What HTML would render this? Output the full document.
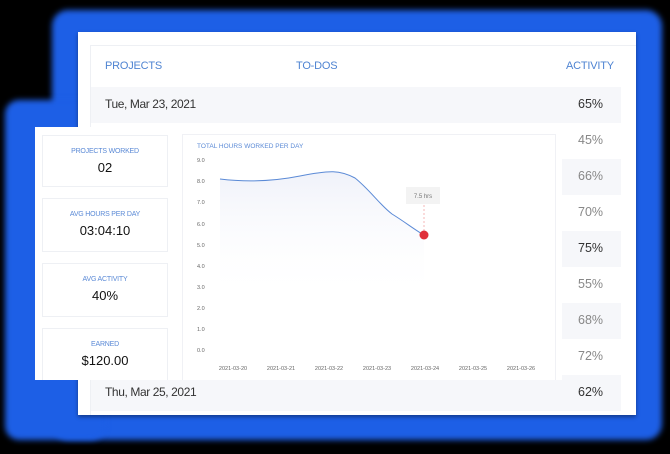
<!DOCTYPE html>
<html><head><style>
*{margin:0;padding:0;box-sizing:border-box}
body{width:670px;height:454px;background:#000;position:relative;overflow:hidden;font-family:"Liberation Sans",sans-serif}
.glow{position:absolute;background:#1d5fe6;filter:blur(3px)}
.main{position:absolute;left:78px;top:32px;width:558px;height:383px;background:#fff;box-shadow:0 2px 4px rgba(0,0,0,.4)}
.panel{position:absolute;left:90px;top:45px;width:546px;height:370px;border-left:1px solid #eef0f4;border-top:1px solid #eef0f4}
.h{position:absolute;top:60px;color:#4f84d2;font-size:11px;letter-spacing:-0.2px}
.row{position:absolute;left:91px;width:530px;height:36px}
.sh{background:#f6f7fa}
.row span{position:absolute;top:10px;font-size:12px;letter-spacing:-0.4px;color:#333}
.row .p{left:487px;color:#333;font-size:12.5px;letter-spacing:0}
.row .g{color:#888}
.ov{position:absolute;left:35px;top:127px;width:527px;height:253px;background:#fff}
.st{position:absolute;left:7px;width:126px;border:1px solid #eef0f4;text-align:center}
.st .l{font-size:7px;color:#5b8ad6;margin-top:12px;letter-spacing:-0.2px}
.st .v{font-size:13px;color:#111;margin-top:5px}
.ch{position:absolute;left:147px;top:7px;width:374px;height:246px;border:1px solid #f0f1f5;border-bottom:none}
</style></head><body>
<div class="glow" style="left:52px;top:10px;width:610px;height:430px;border-radius:16px"></div>
<div class="glow" style="left:5px;top:100px;width:100px;height:340px;border-radius:14px"></div>
<div class="main"></div>
<div class="panel"></div>
<div class="h" style="left:105px">PROJECTS</div>
<div class="h" style="left:296px">TO-DOS</div>
<div class="h" style="left:566px">ACTIVITY</div>
<div class="row sh" style="top:87px"><span style="left:14px">Tue, Mar 23, 2021</span><span class="p">65%</span></div>
<div class="row" style="top:123px"><span class="p g">45%</span></div>
<div class="row sh" style="top:159px"><span class="p g">66%</span></div>
<div class="row" style="top:195px"><span class="p g">70%</span></div>
<div class="row sh" style="top:231px"><span class="p">75%</span></div>
<div class="row" style="top:267px"><span class="p g">55%</span></div>
<div class="row sh" style="top:303px"><span class="p g">68%</span></div>
<div class="row" style="top:339px"><span class="p g">72%</span></div>
<div class="row sh" style="top:375px"><span style="left:14px">Thu, Mar 25, 2021</span><span class="p">62%</span></div>
<div class="ov">
<div class="st" style="top:8px;height:52px"><div class="l">PROJECTS WORKED</div><div class="v">02</div></div>
<div class="st" style="top:71px;height:54px"><div class="l">AVG HOURS PER DAY</div><div class="v">03:04:10</div></div>
<div class="st" style="top:136px;height:54px"><div class="l">AVG ACTIVITY</div><div class="v">40%</div></div>
<div class="st" style="top:201px;height:52px;border-bottom:none"><div class="l">EARNED</div><div class="v">$120.00</div></div>
<div class="ch"></div>
</div>
<svg style="position:absolute;left:0;top:0" width="670" height="454" font-family="Liberation Sans" >
<defs><linearGradient id="f" x1="0" y1="0" x2="0" y2="1"><stop offset="0" stop-color="#f0f2fa"/><stop offset="1" stop-color="#fff" stop-opacity="0"/></linearGradient></defs>
<text x="197" y="148" font-size="6.5" fill="#5b8ad6">TOTAL HOURS WORKED PER DAY</text>
<g font-size="5.5" fill="#666">
<text x="197" y="162">9.0</text><text x="197" y="183">8.0</text><text x="197" y="204">7.0</text><text x="197" y="226">6.0</text><text x="197" y="247">5.0</text><text x="197" y="268">4.0</text><text x="197" y="289">3.0</text><text x="197" y="310">2.0</text><text x="197" y="331">1.0</text><text x="197" y="352">0.0</text>
<g text-anchor="middle"><text x="233" y="370">2021-03-20</text><text x="281" y="370">2021-03-21</text><text x="329" y="370">2021-03-22</text><text x="377" y="370">2021-03-23</text><text x="425" y="370">2021-03-24</text><text x="473" y="370">2021-03-25</text><text x="521" y="370">2021-03-26</text></g>
</g>
<path d="M220 179 C245 182 270 182 300 176 S340 170 355 178 C370 190 380 205 392 214 C405 222 415 230 424 235 L424 300 L220 300 Z" fill="url(#f)"/>
<path d="M220 179 C245 182 270 182 300 176 S340 170 355 178 C370 190 380 205 392 214 C405 222 415 230 424 235" fill="none" stroke="#5b8ad6" stroke-width="1"/>
<rect x="406" y="187" width="34" height="17" fill="#f3f3f3"/>
<text x="423" y="198" font-size="6" fill="#777" text-anchor="middle">7.5 hrs</text>
<line x1="424" y1="205" x2="424" y2="232" stroke="#e88" stroke-width=".6" stroke-dasharray="2 2"/>
<circle cx="424" cy="235" r="4.5" fill="#e0303a"/>
</svg>
</body></html>
